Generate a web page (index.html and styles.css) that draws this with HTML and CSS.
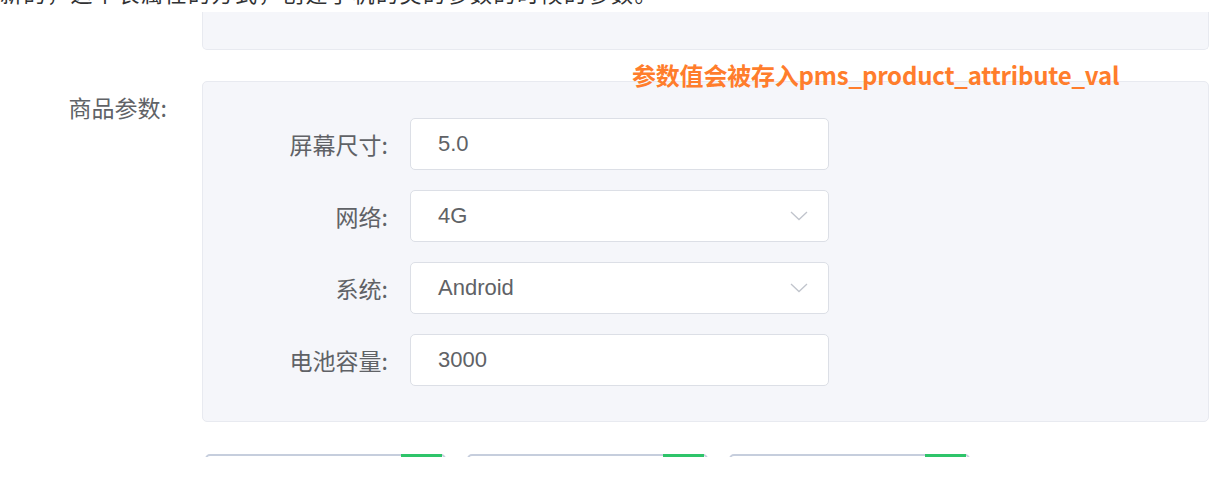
FILE: index.html
```html
<!DOCTYPE html>
<html lang="zh-CN">
<head>
<meta charset="utf-8">
<link rel="stylesheet" href="styles.css">
</head>
<body>
<div class="page">
  <div class="top-note">新的，这个表属性的方式，创建手机的类的参数的时候的参数。</div>
  <div class="form-row first">
    <div class="row-label"></div>
    <div class="panel panel-top"></div>
  </div>
  <div class="form-row params">
    <div class="row-label">商品参数:</div>
    <div class="panel panel-params">
      <div class="attr-row">
        <div class="attr-label">屏幕尺寸:</div>
        <div class="attr-input"><span class="val">5.0</span></div>
      </div>
      <div class="attr-row">
        <div class="attr-label">网络:</div>
        <div class="attr-input select"><span class="val">4G</span>
          <svg class="chev" width="18" height="10" viewBox="0 0 18 10"><path d="M1 1 L9 8.5 L17 1" fill="none" stroke="#c0c4cc" stroke-width="1.3"/></svg>
        </div>
      </div>
      <div class="attr-row">
        <div class="attr-label">系统:</div>
        <div class="attr-input select"><span class="val">Android</span>
          <svg class="chev" width="18" height="10" viewBox="0 0 18 10"><path d="M1 1 L9 8.5 L17 1" fill="none" stroke="#c0c4cc" stroke-width="1.3"/></svg>
        </div>
      </div>
      <div class="attr-row">
        <div class="attr-label">电池容量:</div>
        <div class="attr-input"><span class="val">3000</span></div>
      </div>
    </div>
    <div class="annotation">参数值会被存入pms_product_attribute_val</div>
  </div>
  <div class="cards">
    <div class="card"><span class="tag"></span></div>
    <div class="card"><span class="tag"></span></div>
    <div class="card"><span class="tag"></span></div>
  </div>
</div>
</body>
</html>
```
FILE: styles.css
```css
html, body {
  margin: 0;
  padding: 0;
  background: #ffffff;
}
body {
  width: 1228px;
  height: 484px;
  overflow: hidden;
  font-family: "Liberation Sans", "Noto Sans CJK SC", sans-serif;
  color: #606266;
}
.page {
  display: flex;
  flex-direction: column;
}
.top-note {
  height: 22px;
  margin-top: -19px;
  font-size: 22px;
  line-height: 22px;
  letter-spacing: 1.5px;
  color: #303133;
  white-space: nowrap;
  font-family: "Noto Sans CJK SC", sans-serif;
}
.form-row {
  display: flex;
  position: relative;
}
.row-label {
  width: 202px;
  flex: none;
  box-sizing: border-box;
  padding-right: 35px;
  text-align: right;
  font-size: 23px;
  font-family: "Noto Sans CJK SC", sans-serif;
  color: #606266;
}
.panel {
  width: 1007px;
  box-sizing: border-box;
  background: #f5f6fa;
  border: 1px solid #e8eaf0;
  border-radius: 5px;
}
.first {
  margin-top: 9px;
}
.panel-top {
  height: 38px;
  border-top: none;
  border-top-left-radius: 0;
  border-top-right-radius: 0;
}
.params {
  margin-top: 31px;
}
.params .row-label {
  padding-top: 11px;
  line-height: 30px;
}
.panel-params {
  padding: 36px 0 35px 0;
  display: flex;
  flex-direction: column;
  gap: 20px;
}
.attr-row {
  display: flex;
  align-items: center;
  height: 52px;
}
.attr-label {
  width: 207px;
  flex: none;
  box-sizing: border-box;
  padding-right: 22px;
  text-align: right;
  font-size: 23px;
  font-family: "Noto Sans CJK SC", sans-serif;
  color: #606266;
}
.attr-input {
  width: 419px;
  height: 52px;
  box-sizing: border-box;
  background: #ffffff;
  border: 1px solid #dcdfe6;
  border-radius: 5px;
  padding-left: 27px;
  padding-right: 20px;
  display: flex;
  align-items: center;
  justify-content: space-between;
}
.val {
  font-size: 22px;
  color: #606266;
  font-family: "Liberation Sans", sans-serif;
}
.chev {
  display: block;
}
.annotation {
  position: absolute;
  left: 632px;
  top: -24px;
  font-size: 24px;
  font-weight: bold;
  color: #ff7d2c;
  font-family: "Noto Sans CJK SC", sans-serif;
  white-space: nowrap;
  letter-spacing: -0.2px;
}
.cards {
  display: flex;
  gap: 21px;
  margin-top: 32px;
  margin-left: 205px;
  height: 3px;
  overflow: hidden;
}
.card {
  width: 241px;
  height: 60px;
  box-sizing: border-box;
  border: 2px solid #c6cedd;
  border-radius: 5px;
  position: relative;
}
.tag {
  position: absolute;
  right: 2px;
  top: -2px;
  width: 41px;
  height: 8px;
  background: #2ec46a;
}
```
